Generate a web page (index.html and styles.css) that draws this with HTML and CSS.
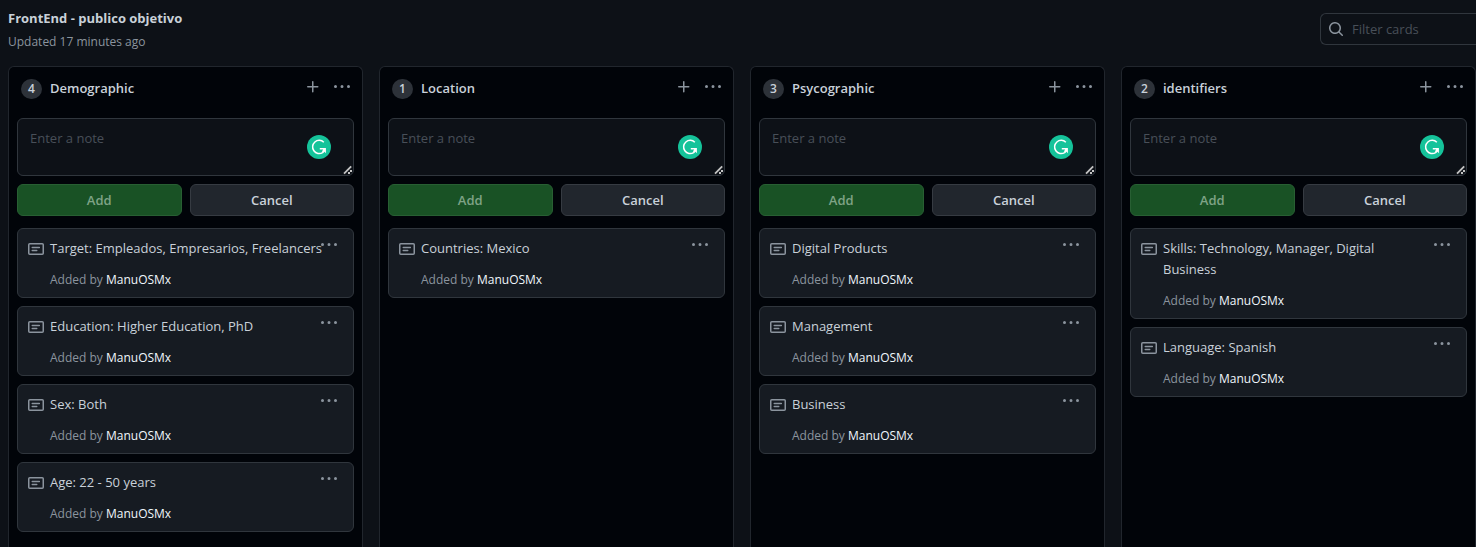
FILE: index.html
```html
<!DOCTYPE html>
<html lang="en">
<head>
<meta charset="utf-8">
<meta name="viewport" content="width=device-width, initial-scale=1">
<title>FrontEnd - publico objetivo</title>
<link rel="stylesheet" href="styles.css">
</head>
<body>
<svg class="sprite" aria-hidden="true">
  <symbol id="plus" viewBox="0 0 16 16"><path d="M7.75 2a.75.75 0 01.75.75V7h4.25a.75.75 0 110 1.5H8.5v4.25a.75.75 0 11-1.5 0V8.5H2.75a.75.75 0 010-1.5H7V2.75A.75.75 0 017.75 2z"/></symbol>
  <symbol id="dots" viewBox="0 0 16 16"><path d="M8 9a1.5 1.5 0 100-3 1.5 1.5 0 000 3zM1.5 9a1.5 1.5 0 100-3 1.5 1.5 0 000 3zm13 0a1.5 1.5 0 100-3 1.5 1.5 0 000 3z"/></symbol>
  <symbol id="search" viewBox="0 0 16 16"><path fill-rule="evenodd" d="M11.5 7a4.499 4.499 0 11-8.998 0A4.499 4.499 0 0111.5 7zm-.82 4.74a6 6 0 111.06-1.06l3.04 3.04a.75.75 0 11-1.06 1.06l-3.04-3.04z"/></symbol>
  <symbol id="note" viewBox="0 0 16 16"><rect x=".75" y="2.75" width="14.5" height="10.5" rx="1" fill="none" stroke="currentColor" stroke-width="1.5"/><path fill="none" stroke="currentColor" stroke-width="1.4" stroke-linecap="round" d="M4.2 6.5h7.2M4.2 9.5h4.6"/></symbol>
  <symbol id="grammar" viewBox="0 0 24 24"><circle cx="12" cy="12" r="12" fill="#15c39a"/><path fill="none" stroke="#fff" stroke-width="1.5" d="M16.8 7.2A6.6 6.6 0 1 0 15.6 17.6Q17 16.7 17.6 14.6"/><path fill="#fff" d="M12.8 12.9h6.1v5.4l-1.7-1.7-1.2.9-1-1.2 1.2-1.9h-3.4z"/></symbol>
  <symbol id="grip" viewBox="0 0 10 10"><path fill="none" stroke="#c4c4c4" stroke-width="1.8" d="M1 8.6l7.2-7.2"/><path fill="#c4c4c4" d="M5 7h2v2H5zM7 5h2v2H7z"/></symbol>
</svg>

<header class="top">
  <div class="project">
    <h1 class="project-name">FrontEnd - publico objetivo</h1>
    <p class="updated">Updated 17 minutes ago</p>
  </div>
  <div class="filter">
    <svg class="icon"><use href="#search"/></svg>
    <input class="filter-input" type="text" placeholder="Filter cards" aria-label="Filter cards">
  </div>
</header>

<main class="board" id="board"></main>
<script src="board.js"></script>
</body>
</html>
```

FILE: board.js
```js
const columns = [
  { title: "Demographic", cards: ["Target: Empleados, Empresarios, Freelancers", "Education: Higher Education, PhD", "Sex: Both", "Age: 22 - 50 years"] },
  { title: "Location", cards: ["Countries: Mexico"] },
  { title: "Psycographic", cards: ["Digital Products", "Management", "Business"] },
  { title: "identifiers", cards: ["Skills: Technology, Manager, Digital<br>Business", "Language: Spanish"] }
];

const card = text => `
  <article class="card">
    <svg class="icon note-icon"><use href="#note"/></svg>
    <div class="card-body">
      <p class="card-text">${text}</p>
      <p class="card-meta">Added by <a class="author" href="#">ManuOSMx</a></p>
    </div>
    <button class="icon-button card-menu" type="button" aria-label="Card menu"><svg class="icon"><use href="#dots"/></svg></button>
  </article>`;

const column = ({ title, cards }) => `
  <section class="column">
    <header class="column-head">
      <span class="count">${cards.length}</span>
      <h2 class="column-title">${title}</h2>
      <div class="column-tools">
        <button class="icon-button" type="button" aria-label="Add a note"><svg class="icon"><use href="#plus"/></svg></button>
        <button class="icon-button" type="button" aria-label="Column menu"><svg class="icon"><use href="#dots"/></svg></button>
      </div>
    </header>
    <form class="note-form">
      <div class="note-field">
        <textarea class="note-input" placeholder="Enter a note" aria-label="Enter a note"></textarea>
        <svg class="grammar"><use href="#grammar"/></svg>
        <svg class="grip"><use href="#grip"/></svg>
      </div>
      <div class="actions">
        <button class="button button-add" type="button" disabled>Add</button>
        <button class="button" type="button">Cancel</button>
      </div>
    </form>
    <div class="cards">${cards.map(card).join("")}</div>
  </section>`;

document.getElementById("board").innerHTML = columns.map(column).join("");
```

FILE: styles.css
```css
* { box-sizing: border-box; }

body {
  margin: 0;
  height: 100vh;
  overflow: hidden;
  display: flex;
  flex-direction: column;
  background: #0d1117;
  color: #c9d1d9;
  font: 13px/21px "Open Sans", "Noto Sans", sans-serif;
}

h1, h2, p { margin: 0; }
button, input, textarea { font: inherit; }

.sprite { position: absolute; width: 0; height: 0; }
.icon { display: block; flex: none; width: 16px; height: 16px; fill: currentColor; }

.top {
  display: flex;
  justify-content: space-between;
  align-items: flex-start;
  padding: 8px 0 0 8px;
  height: 66px;
  flex: none;
}
.project-name { font-size: 13px; font-weight: 700; line-height: 21px; }
.updated { margin-top: 4px; font-size: 12px; line-height: 18px; color: #8b949e; }

.filter {
  display: flex;
  align-items: center;
  gap: 8px;
  width: 156px;
  height: 32px;
  margin-top: 5px;
  padding-left: 7px;
  border: 1px solid #30363d;
  border-right: 0;
  border-radius: 6px 0 0 6px;
  color: #8b949e;
}
.filter-input {
  flex: 1;
  min-width: 0;
  padding: 0;
  border: 0;
  outline: 0;
  background: none;
  color: #c9d1d9;
}
::placeholder { color: #484f58; opacity: 1; }

.board {
  flex: 1;
  display: grid;
  grid-template-columns: repeat(4, minmax(0, 1fr));
  gap: 16px;
  padding-left: 8px;
}
.column {
  padding: 0 8px;
  background: #010409;
  border: 1px solid #21262d;
  border-bottom: 0;
  border-radius: 6px 6px 0 0;
}
.column-head {
  display: flex;
  align-items: center;
  gap: 8px;
  height: 43px;
  padding: 0 4px;
}
.count {
  width: 21px;
  height: 20px;
  border-radius: 10px;
  background: #2d3239;
  font-size: 12px;
  font-weight: 600;
  line-height: 20px;
  text-align: center;
}
.column-title { flex: 1; font-size: 13px; font-weight: 600; line-height: 21px; }
.icon-button {
  padding: 0;
  border: 0;
  background: none;
  color: #8b949e;
}
.column-tools { display: flex; gap: 13px; padding-bottom: 3px; }

.note-field { position: relative; margin-top: 8px; }
.note-input {
  display: block;
  width: 100%;
  height: 58px;
  padding: 9px 12px;
  border: 1px solid #30363d;
  border-radius: 6px;
  outline: 0;
  resize: none;
  background: #0d1117;
  color: #c9d1d9;
}
.grammar { position: absolute; right: 23px; bottom: 17px; width: 24px; height: 24px; }
.grip { position: absolute; right: 1px; bottom: 1px; width: 10px; height: 10px; }

.actions { display: grid; grid-template-columns: 1fr 1fr; gap: 8px; margin-top: 8px; }
.button {
  height: 32px;
  padding: 0;
  border: 1px solid #363b42;
  border-radius: 6px;
  background: #21262d;
  color: #c9d1d9;
  font-weight: 600;
}
.button-add { background: #195225; border-color: #285f33; color: #7fa386; }

.cards { display: grid; gap: 8px; margin-top: 12px; }
.card {
  position: relative;
  display: flex;
  gap: 6px;
  padding: 9px 28px 7px 10px;
  border: 1px solid #30363d;
  border-radius: 6px;
  background: #161b22;
}
.note-icon { margin-top: 3px; color: #8b949e; }
.card-body { flex: 1; min-width: 0; }
.card-meta { margin-top: 10px; font-size: 12px; color: #8b949e; }
.author { color: #f0f6fc; text-decoration: none; }
.card-menu { position: absolute; top: 8px; right: 16px; }
```
